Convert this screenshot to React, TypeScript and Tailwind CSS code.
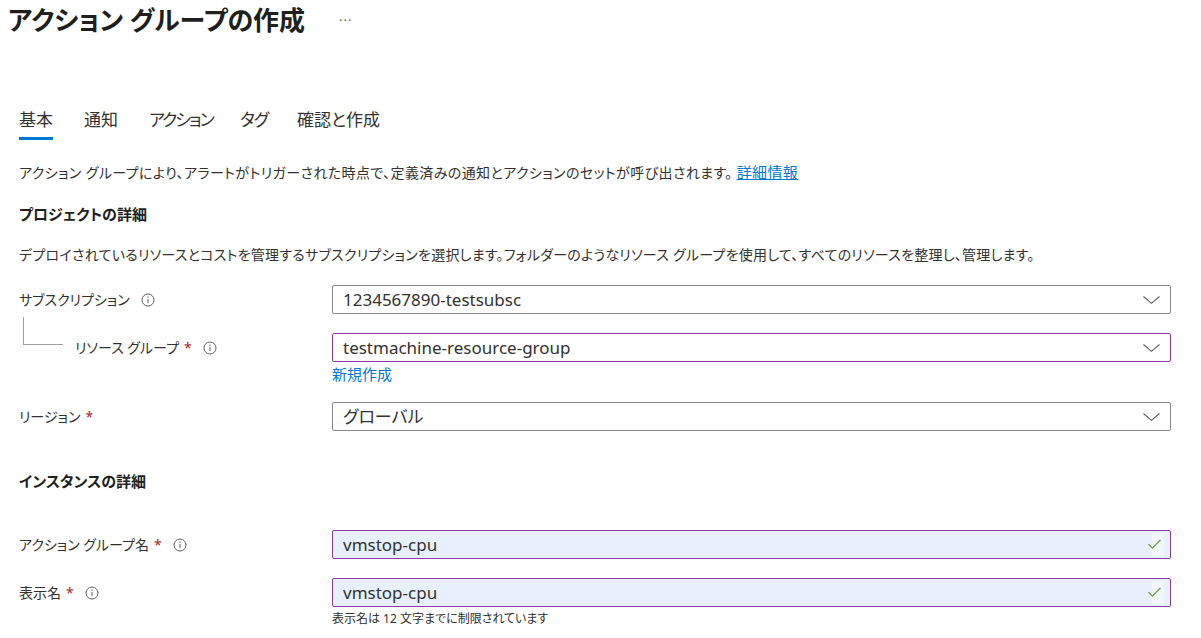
import { Check } from 'lucide-react';

const font = "font-['Noto_Sans','Noto_Sans_CJK_JP',sans-serif] [font-feature-settings:'palt']";

const InfoIcon = () => (
    <svg width="14" height="14" viewBox="0 0 14 14" className="shrink-0">
        <circle cx="7" cy="7" r="6" fill="none" stroke="#605e5c" strokeWidth="1" />
        <line x1="7" y1="6" x2="7" y2="10.2" stroke="#605e5c" strokeWidth="1" />
        <circle cx="7" cy="4.2" r="0.7" fill="#605e5c" />
    </svg>
);

const Chevron = () => (
    <svg width="17" height="8" viewBox="0 0 17 8" className="shrink-0">
        <polyline points="0.5,0.5 8.5,7.3 16.5,0.5" fill="none" stroke="#605e5c" strokeWidth="1.1" />
    </svg>
);

const Star = () => <span className="text-[#a4262c] ml-[5px] text-[14px]">*</span>;

function Label({ text, required, info }: { text: string; required?: boolean; info?: boolean }) {
    return (
        <div className="flex items-center text-[14px] text-[#323130]">
            <span>{text}</span>
            {required && <Star />}
            {info && (
                <span className="ml-[11px] flex items-center">
                    <InfoIcon />
                </span>
            )}
        </div>
    );
}

function Select({ value, purple }: { value: string; purple?: boolean }) {
    return (
        <div
            className={`h-[29px] flex items-center justify-between pl-[10px] pr-[10px] rounded-[2px] border bg-white
                ${purple ? 'border-[#8a3ca0]' : 'border-[#8a8886]'}`}
        >
            <span className="text-[17px] text-[#323130]">{value}</span>
            <Chevron />
        </div>
    );
}

function TextInput({ value }: { value: string }) {
    return (
        <div className="h-[29px] flex items-center justify-between pl-[10px] pr-[6px] rounded-[2px] border border-[#8a3ca0] bg-[#e8f0fe]">
            <span className="text-[17px] text-[#323130]">{value}</span>
            <span className="h-[23px] w-[12px] bg-[#f3f6fc] flex items-center justify-center">
                <Check className="w-[17px] h-[17px] text-[#5ea32b] shrink-0 -ml-[8px]" strokeWidth={1.6} />
            </span>
        </div>
    );
}

const tabs = [
    { label: '基本', cls: 'w-[65px]' },
    { label: '通知', cls: 'w-[65px]' },
    { label: 'アクション', cls: 'w-[91px] tracking-[-2px]' },
    { label: 'タグ', cls: 'w-[57px] tracking-[-1px]' },
    { label: '確認と作成', cls: 'w-auto' },
];

export default function App() {
    return (
        <div className={`${font} w-[1201px] h-[638px] bg-white overflow-hidden text-[#323130]`}>
            {/* Title */}
            <div className="flex items-center pl-[8px] pt-[4px]">
                <h1 className="text-[26px] leading-[32px] font-bold text-[#201f1e]">アクション グループの作成</h1>
                <span className="ml-[34px] text-[13px] text-[#605e5c] tracking-[1px] mt-[2px]">···</span>
            </div>

            <div className="pl-[19px] pr-[30px]">
                {/* Tabs */}
                <div className="flex mt-[73px]">
                    {tabs.map((t, i) => (
                        <div key={t.label} className={`${t.cls} flex`}>
                            <div className="flex flex-col">
                                <span className="text-[17px] leading-[22px] text-[#323130]">{t.label}</span>
                                <div className={`mt-[6px] h-[3px] ${i === 0 ? 'bg-[#0078d4]' : 'bg-transparent'}`} />
                            </div>
                        </div>
                    ))}
                </div>

                {/* Basics description */}
                <p className="mt-[22px] text-[14px] leading-[20px] tracking-[0.4px]">
                    アクション グループにより、アラートがトリガーされた時点で、定義済みの通知とアクションのセットが呼び出されます。
                    <a className="text-[#0078d4] underline ml-[4px] text-[15px]">詳細情報</a>
                </p>

                <h2 className="mt-[21px] text-[15px] leading-[20px] font-bold text-[#201f1e]">プロジェクトの詳細</h2>
                <p className="mt-[21px] text-[14px] leading-[20px] tracking-[0.25px]">
                    デプロイされているリソースとコストを管理するサブスクリプションを選択します。フォルダーのようなリソース グループを使用して、すべてのリソースを整理し、管理します。
                </p>

                {/* Subscription */}
                <div className="mt-[20px] flex items-center">
                    <div className="w-[313px]">
                        <Label text="サブスクリプション" info />
                    </div>
                    <div className="flex-1">
                        <Select value="1234567890-testsubsc" />
                    </div>
                </div>

                {/* Resource group */}
                <div className="mt-[19px] flex">
                    <div className="w-[313px] flex items-start">
                        <div className="ml-[4px] -mt-[16px] w-[40px] h-[28px] border-l border-b border-[#a19f9d] shrink-0" />
                        <div className="ml-[12px] h-[29px] flex items-center">
                            <Label text="リソース グループ" required info />
                        </div>
                    </div>
                    <div className="flex-1">
                        <Select value="testmachine-resource-group" purple />
                        <a className="block text-[15px] leading-[20px] mt-[2px] text-[#0078d4]">新規作成</a>
                    </div>
                </div>

                {/* Region */}
                <div className="mt-[18px] flex items-center">
                    <div className="w-[313px]">
                        <Label text="リージョン" required />
                    </div>
                    <div className="flex-1">
                        <Select value="グローバル" />
                    </div>
                </div>

                <h2 className="mt-[40px] text-[15px] leading-[20px] font-bold text-[#201f1e]">インスタンスの詳細</h2>

                {/* Action group name */}
                <div className="mt-[39px] flex items-center">
                    <div className="w-[313px]">
                        <Label text="アクション グループ名" required info />
                    </div>
                    <div className="flex-1">
                        <TextInput value="vmstop-cpu" />
                    </div>
                </div>

                {/* Display name */}
                <div className="mt-[19px] flex">
                    <div className="w-[313px] h-[29px] flex items-center">
                        <Label text="表示名" required info />
                    </div>
                    <div className="flex-1">
                        <TextInput value="vmstop-cpu" />
                        <p className="mt-[4px] text-[12px] leading-[16px] text-[#323130]">表示名は 12 文字までに制限されています</p>
                    </div>
                </div>
            </div>
        </div>
    );
}
